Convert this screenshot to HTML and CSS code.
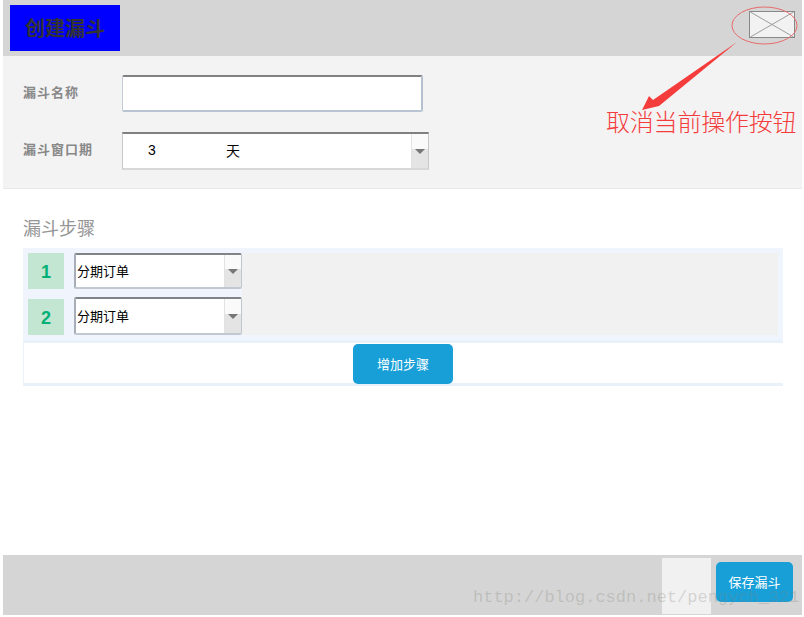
FILE: index.html
```html
<!DOCTYPE html>
<html lang="zh-CN">
<head>
<meta charset="utf-8">
<title>创建漏斗</title>
<link rel="stylesheet" href="styles.css">
</head>
<body>
<div class="page">
  <header class="header">
    <h1 class="title">创建漏斗</h1>
    <button class="close" type="button" aria-label="取消">
      <svg class="close-icon" viewBox="0 0 45 26" width="45" height="26">
        <path d="M0 0L45 26M45 0L0 26" stroke="#999" stroke-width="1" fill="none"/>
      </svg>
    </button>
  </header>

  <section class="form">
    <div class="form-row">
      <label class="form-label">漏斗名称</label>
      <div class="input"></div>
    </div>
    <div class="form-row">
      <label class="form-label form-label-high">漏斗窗口期</label>
      <div class="select window">
        <span class="window-num">3</span>
        <span class="window-unit">天</span>
        <span class="select-arrow"><i class="caret"></i></span>
      </div>
    </div>
  </section>

  <section class="funnel">
    <h2 class="funnel-title">漏斗步骤</h2>
    <div class="steps">
      <div class="steps-body">
        <div class="step-rows">
          <div class="step">
            <span class="step-num">1</span>
            <div class="select step-select"><span class="step-value">分期订单</span><span class="select-arrow"><i class="caret"></i></span></div>
          </div>
          <div class="step step-end">
            <span class="step-num">2</span>
            <div class="select step-select"><span class="step-value">分期订单</span><span class="select-arrow"><i class="caret"></i></span></div>
          </div>
        </div>
        <div class="steps-fill"></div>
      </div>
    </div>
    <div class="add-row">
      <button class="btn add-btn" type="button">增加步骤</button>
    </div>
  </section>

  <footer class="footer">
    <div class="blank"></div>
    <button class="btn save-btn" type="button">保存漏斗</button>
  </footer>
</div>

<svg class="notes" width="804" height="617" viewBox="0 0 804 617" aria-hidden="true">
  <ellipse cx="764.5" cy="25.5" rx="32.5" ry="18.5" fill="none" stroke="#e96a6a" stroke-width="1"/>
  <polygon points="642,110 649,96 653,100 737,42 659,106" fill="#f43c3c"/>
</svg>
<div class="note-text">取消当前操作按钮</div>
<div class="watermark">http://blog.csdn.net/pengych_321</div>
</body>
</html>
```
FILE: styles.css
```css
* { box-sizing: border-box; }
html, body { margin: 0; padding: 0; }
body {
  position: relative;
  width: 804px;
  height: 617px;
  overflow: hidden;
  background: #fff;
  font-family: "Noto Sans CJK SC", "Liberation Sans", sans-serif;
}
.page {
  margin-left: 3px;
  width: 799px;
  height: 615px;
  display: flex;
  flex-direction: column;
}
.header {
  height: 56px;
  flex: none;
  background: #d5d5d5;
  padding: 5px 7px;
  display: flex;
  justify-content: space-between;
  align-items: flex-start;
}
.title {
  margin: 0;
  width: 110px;
  height: 46px;
  background: #0000ff;
  color: #333;
  font-size: 20px;
  font-weight: 700;
  line-height: 46px;
  padding-left: 15px;
}
.close {
  width: 46px;
  height: 27px;
  margin-top: 6px;
  padding: 0;
  border: 1px solid #888;
  background: #f2f2f2;
  display: block;
}
.close-icon { display: block; width: 44px; height: 25px; }
.form {
  height: 133px;
  flex: none;
  background: #f3f3f3;
  border-bottom: 1px solid #e8e8e8;
  padding-top: 19px;
  display: flex;
  flex-direction: column;
  gap: 20px;
}
.form-row { display: flex; align-items: center; }
.form-label {
  width: 119px;
  padding-left: 20px;
  font-size: 13px;
  font-weight: 700;
  color: #888;
  letter-spacing: 1px;
  margin-top: -4px;
}
.form-label-high { margin-top: -6px; }
.input {
  width: 301px;
  height: 37px;
  background: #fff;
  border: 1px solid #c4ccd8;
  border-top: 2px solid #808080;
  border-right: 2px solid #b4c0d0;
  border-bottom: 2px solid #b8c4d4;
  border-radius: 2px;
}
.select {
  display: flex;
  align-items: center;
  background: #fff;
  color: #000;
  font-size: 13px;
}
.window {
  width: 307px;
  height: 38px;
  border: 1px solid #c8c8c8;
  border-top: 2px solid #808080;
  border-bottom: 2px solid #d8d8d8;
}
.window-num {
  width: 103px;
  padding-left: 25px;
  font-family: "Liberation Sans", sans-serif;
  font-size: 14px;
  margin-top: -2px;
}
.window-unit { font-size: 14px; flex: 1; margin-top: -2px; }
.select-arrow {
  width: 17px;
  align-self: stretch;
  flex: none;
  background: linear-gradient(#fafafa 0 45%, #e4e4e4 45% 100%);
  border-left: 1px solid #e2e2e2;
  display: flex;
  align-items: center;
  justify-content: center;
}
.caret {
  width: 0;
  height: 0;
  border-left: 5px solid transparent;
  border-right: 5px solid transparent;
  border-top: 5px solid #777;
}
.funnel { padding: 26px 19px 0 20px; }
.funnel-title {
  margin: 0 0 9px;
  font-size: 18px;
  font-weight: 400;
  line-height: 24px;
  color: #959595;
}
.steps { background: #f0f4fc; padding: 5px 5px 5px; }
.steps-body { display: flex; }
.step-rows {
  width: 214px;
  flex: none;
  display: grid;
  grid-template-rows: 36px 38px;
  row-gap: 8px;
}
.step { display: flex; gap: 10px; align-items: stretch; }
.step-num {
  width: 36px;
  height: 36px;
  flex: none;
  background: #c3e6d2;
  color: #02b077;
  font-family: "Liberation Sans", sans-serif;
  font-size: 18px;
  font-weight: 700;
  line-height: 38px;
  text-align: center;
}
.step-end .step-num { align-self: flex-end; }
.step-select {
  width: 168px;
  border: 1px solid #c0c6d0;
  border-top: 2px solid #808488;
  border-left: 2px solid #a8aeb8;
  border-bottom: 2px solid #c0c8d4;
  border-radius: 2px;
}
.step-value { flex: 1; padding-left: 1px; font-size: 13px; margin-top: -2px; }
.steps-fill { flex: 1; background: #f1f1f1; }
.add-row {
  height: 46px;
  background: #fff;
  border-top: 3px solid #e9f1fb;
  border-bottom: 3px solid #e9f1fb;
  box-shadow: inset 1px 0 0 #eef3fb;
  display: flex;
  justify-content: center;
  align-items: flex-start;
}
.btn {
  border: 0;
  padding: 0 0 2px;
  background: #189fd8;
  color: #fff;
  font-family: inherit;
  font-size: 13px;
  border-radius: 5px;
}
.add-btn { width: 100px; height: 40px; margin-top: 1px; }
.footer {
  margin-top: auto;
  height: 60px;
  flex: none;
  background: #d5d5d5;
  padding-right: 9px;
  display: flex;
  justify-content: flex-end;
  align-items: flex-start;
  gap: 5px;
}
.blank { width: 49px; height: 56px; margin-top: 3px; background: #f1f1f1; }
.save-btn { width: 77px; height: 40px; margin-top: 7px; }
.notes { position: absolute; left: 0; top: 0; pointer-events: none; }
.note-text {
  position: absolute;
  left: 606px;
  top: 103px;
  font-size: 24px;
  line-height: 36px;
  color: #f43c3c;
  white-space: nowrap;
  font-weight: 300;
  letter-spacing: -0.2px;
}
.watermark {
  position: absolute;
  left: 473px;
  top: 588px;
  font-family: "Liberation Mono", monospace;
  font-size: 17px;
  line-height: 20px;
  color: rgba(130, 130, 120, 0.28);
  white-space: nowrap;
}
```
